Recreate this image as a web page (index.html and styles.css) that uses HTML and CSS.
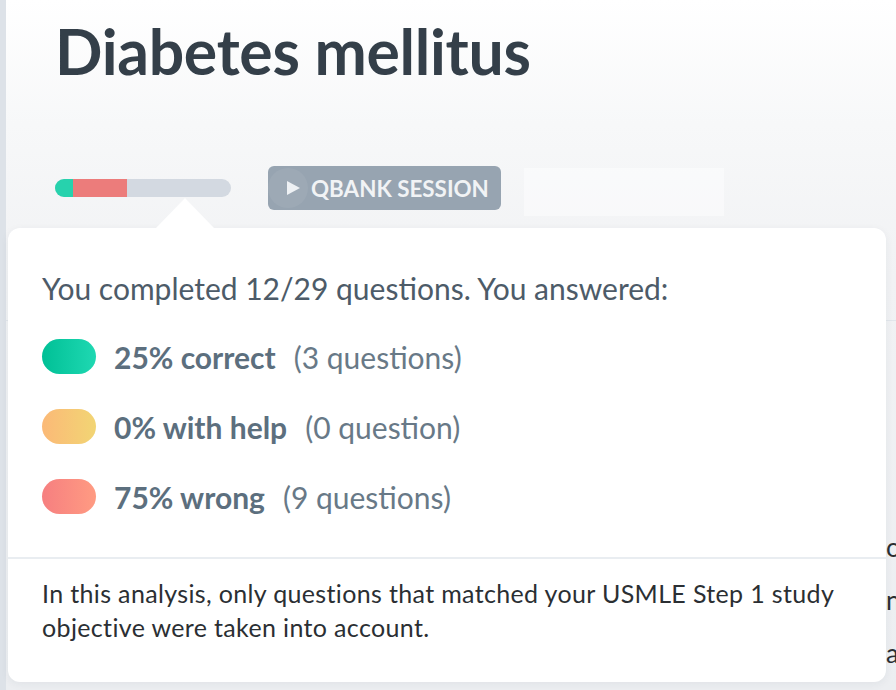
FILE: index.html
```html
<!DOCTYPE html>
<html>
<head>
    <title>Diabetes mellitus</title>
    <meta charset="UTF-8">
    <meta name="viewport" content="width=device-width, initial-scale=1.0">
    <link rel="stylesheet" href="styles.css">
</head>
<body>
    <div class="page">
        <header class="topic-header">
            <h1>Diabetes mellitus</h1>

            <div class="toolbar">
                <div class="progress" aria-label="Progress">
                    <span class="progress-correct" style="width: 18px;"></span>
                    <span class="progress-wrong" style="width: 54px;"></span>
                </div>

                <button type="button" class="session-button">
                    <span class="ripple"></span>
                    <svg class="play-icon" width="13" height="16" viewBox="0 0 13 16">
                        <path d="M0 1 L13 8 L0 15 Z" fill="currentColor"/>
                    </svg>
                    QBANK SESSION
                </button>

                <div class="placeholder"></div>
            </div>
        </header>

        <section class="topic-body">
            <p class="body-text">ob<br>ne<br>a</p>
        </section>

        <!-- Stats popover opened from the progress bar -->
        <div class="popover">
            <div class="popover-main">
                <p class="summary">You completed 12/29 questions. You answered:</p>

                <ul class="stats">
                    <li class="stat">
                        <span class="pill pill-correct"></span>
                        <strong>25% correct</strong>
                        <span class="count">(3 questions)</span>
                    </li>
                    <li class="stat">
                        <span class="pill pill-help"></span>
                        <strong>0% with help</strong>
                        <span class="count">(0 question)</span>
                    </li>
                    <li class="stat">
                        <span class="pill pill-wrong"></span>
                        <strong>75% wrong</strong>
                        <span class="count">(9 questions)</span>
                    </li>
                </ul>
            </div>

            <p class="popover-note">In this analysis, only questions that matched your USMLE Step 1 study objective were taken into account.</p>
        </div>
    </div>
</body>
</html>
```

FILE: styles.css
```css
body {
    font-family: Lato, "Open Sans", sans-serif;
    margin: 0;
    background-color: #eceef1;
    overflow: hidden;
}

.page {
    position: relative;
    height: 690px;
    border-left: 6px solid #dde2e8;
    background: linear-gradient(180deg, #ffffff 0%, #f7f8f9 18%, #f1f2f4 40%, #eceef1 100%);
}

.topic-header {
    padding: 16px 0 0 49px;
    height: 304px;
    box-sizing: border-box;
}

h1 {
    margin: 0;
    font-size: 62.5px;
    font-weight: 700;
    letter-spacing: -0.3px;
    color: #343f49;
    line-height: 70px;
}

.toolbar {
    display: flex;
    align-items: center;
    margin-top: 74px;
}

.progress {
    display: flex;
    width: 176px;
    height: 18px;
    border-radius: 9px;
    background-color: #d3d9e1;
    overflow: hidden;
}

.progress-correct {
    background-color: #27d2ad;
}

.progress-wrong {
    background-color: #ec7c7b;
}

.session-button {
    position: relative;
    overflow: hidden;
    display: flex;
    align-items: center;
    gap: 11px;
    margin-left: 37px;
    height: 44px;
    padding: 0 12px 0 19px;
    border: none;
    border-radius: 6px;
    background-color: #97a4b1;
    color: #f1f3f5;
    font-family: Lato, sans-serif;
    font-size: 22.4px;
    font-weight: 700;
    cursor: pointer;
}

.ripple {
    position: absolute;
    left: 0;
    top: 2px;
    width: 40px;
    height: 40px;
    border-radius: 50%;
    background-color: rgba(255, 255, 255, 0.06);
}

.play-icon {
    position: relative;
    color: #eef1f4;
}

.placeholder {
    width: 200px;
    height: 48px;
    margin: 8px 0 0 23px;
    background-color: rgba(255, 255, 255, 0.45);
}

.topic-body {
    border-top: 1px solid #e2e6eb;
    margin-top: 16px;
    padding: 200px 0 0 880px;
}

.body-text {
    margin: 0;
    font-size: 26px;
    line-height: 53px;
    color: #2b2f33;
    white-space: nowrap;
}

.popover {
    position: absolute;
    left: 2px;
    top: 228px;
    width: 878px;
    height: 454px;
    background-color: #ffffff;
    border-radius: 12px;
    box-shadow: 0 2px 8px rgba(40, 50, 60, 0.06);
}

.popover::before {
    content: "";
    position: absolute;
    left: 147px;
    top: -30px;
    border-left: 30px solid transparent;
    border-right: 30px solid transparent;
    border-bottom: 31px solid #ffffff;
}

.popover-main {
    padding: 42px 34px 0;
    height: 331px;
    box-sizing: border-box;
    border-bottom: 2px solid #e9edf1;
}

.summary {
    margin: 0 0 33px;
    font-size: 30px;
    line-height: 36px;
    color: #4d5b68;
}

.stats {
    list-style: none;
    margin: 0;
    padding: 0;
    display: flex;
    flex-direction: column;
    gap: 35px;
}

.stat {
    display: flex;
    align-items: center;
    height: 35px;
    font-size: 30px;
    color: #5c6f7e;
}

.stat strong {
    margin-left: 18px;
    margin-right: 18px;
}

.count {
    color: #687987;
}

.pill {
    flex: none;
    width: 54px;
    height: 35px;
    border-radius: 18px;
}

.pill-correct {
    background: linear-gradient(90deg, #00c096, #1fd8b2);
}

.pill-help {
    background: linear-gradient(90deg, #fbb977, #f2d574);
}

.pill-wrong {
    background: linear-gradient(90deg, #f67f80, #ff9b82);
}

.popover-note {
    margin: 0;
    padding: 17px 34px 0;
    font-size: 25px;
    letter-spacing: 0.35px;
    line-height: 34px;
    color: #2b2f33;
}
```
